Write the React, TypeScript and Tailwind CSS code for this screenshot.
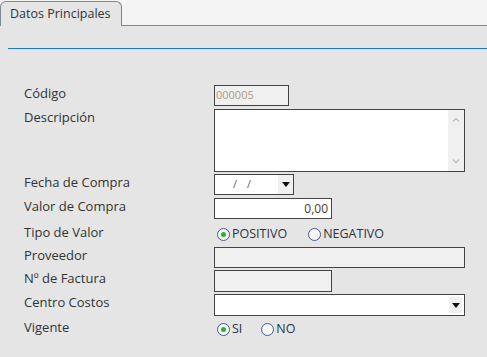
import React from "react";

const font = { fontFamily: '"Open Sans", "Noto Sans", sans-serif' };

function Radio({ checked, label }: { checked?: boolean; label: string }) {
  return (
    <label className="flex items-center gap-[2px] text-[12.5px] leading-[16px] text-[#2b3440]">
      <span className="flex h-[13px] w-[13px] items-center justify-center rounded-full border border-[#3f5f86] bg-[#f7f7f7]">
        {checked && <span className="h-[5px] w-[5px] rounded-full bg-[#27b33a]" />}
      </span>
      <span>{label}</span>
    </label>
  );
}

function Caret() {
  return (
    <svg width="8" height="5" viewBox="0 0 8 5">
      <path d="M0 0h8L4 5z" fill="#111" />
    </svg>
  );
}

function Row({ label, h, children }: { label: string; h: string; children: React.ReactNode }) {
  return (
    <div className={`flex ${h}`}>
      <div className="w-[214px] shrink-0 pl-[24px] text-[13px] leading-[16px] text-[#333]">{label}</div>
      <div className="flex-1">{children}</div>
    </div>
  );
}

export default function App() {
  return (
    <div className="h-[357px] w-[487px] overflow-hidden bg-[#e5e5e5]" style={font}>
      {/* tab strip */}
      <div className="flex h-[26px] items-end border-b border-[#7f8790] bg-[#f4f4f4]">
        <div className="mb-[-1px] flex h-[25px] w-[122px] items-start rounded-t-[6px] border border-b-0 border-[#7f8790] bg-[#e5e5e5] pl-[9px] pt-[4px] text-[12.5px] leading-[16px] text-[#333]">
          Datos Principales
        </div>
      </div>

      <div className="ml-[8px] mt-[22px] h-px bg-[#1f74c9]" />

      <div className="mt-[36px] flex flex-col">
        <Row label="Código" h="h-[24px]">
          <div className="flex h-[21px] w-[75px] items-center border border-[#444] bg-[#f0f0f0] pl-[1px] text-[11px] text-[#ab9b88]">
            000005
          </div>
        </Row>
        <Row label="Descripción" h="h-[65px]">
          <div className="flex h-[63px] w-[251px] border border-[#444] bg-white">
            <div className="flex-1" />
            <div className="flex w-[16px] flex-col items-center justify-between bg-[#f0f0f0] py-[7px]">
              <svg width="8" height="5" viewBox="0 0 8 5">
                <path d="M1 4.5L4 1.5L7 4.5" stroke="#bbb" strokeWidth="1.3" fill="none" />
              </svg>
              <svg width="8" height="5" viewBox="0 0 8 5">
                <path d="M1 0.5L4 3.5L7 0.5" stroke="#bbb" strokeWidth="1.3" fill="none" />
              </svg>
            </div>
          </div>
        </Row>
        <Row label="Fecha de Compra" h="h-[24px]">
          <div className="flex h-[21px] w-[80px] border border-[#444] bg-white">
            <div className="flex flex-1 items-center gap-[10px] pl-[18px] text-[11px] text-[#7a5a3a]">
              <span>/</span>
              <span>/</span>
            </div>
            <div className="flex w-[15px] items-center justify-center bg-[#f0f0f0]">
              <Caret />
            </div>
          </div>
        </Row>
        <Row label="Valor de Compra" h="h-[26px]">
          <div className="flex h-[21px] w-[118px] items-center justify-end border border-[#444] bg-white pr-[3px] text-[12px] text-[#4a3a2a]">
            0,00
          </div>
        </Row>
        <Row label="Tipo de Valor" h="h-[23px]">
          <div className="ml-[3px] mt-[2px] flex gap-[21px]">
            <Radio checked label="POSITIVO" />
            <Radio label="NEGATIVO" />
          </div>
        </Row>
        <Row label="Proveedor" h="h-[23px]">
          <div className="h-[21px] w-[251px] border border-[#444] bg-[#f0f0f0]" />
        </Row>
        <Row label="Nº de Factura" h="h-[24px]">
          <div className="h-[22px] w-[118px] border border-[#444] bg-[#f0f0f0]" />
        </Row>
        <Row label="Centro Costos" h="h-[25px]">
          <div className="flex h-[22px] w-[251px] items-center justify-end border border-[#444] bg-white pr-[2px]">
            <div className="flex h-[16px] w-[13px] items-center justify-center bg-[#f0f0f0]">
              <Caret />
            </div>
          </div>
        </Row>
        <Row label="Vigente" h="h-[24px]">
          <div className="ml-[3px] mt-[2px] flex gap-[19px]">
            <Radio checked label="SI" />
            <Radio label="NO" />
          </div>
        </Row>
      </div>
    </div>
  );
}
